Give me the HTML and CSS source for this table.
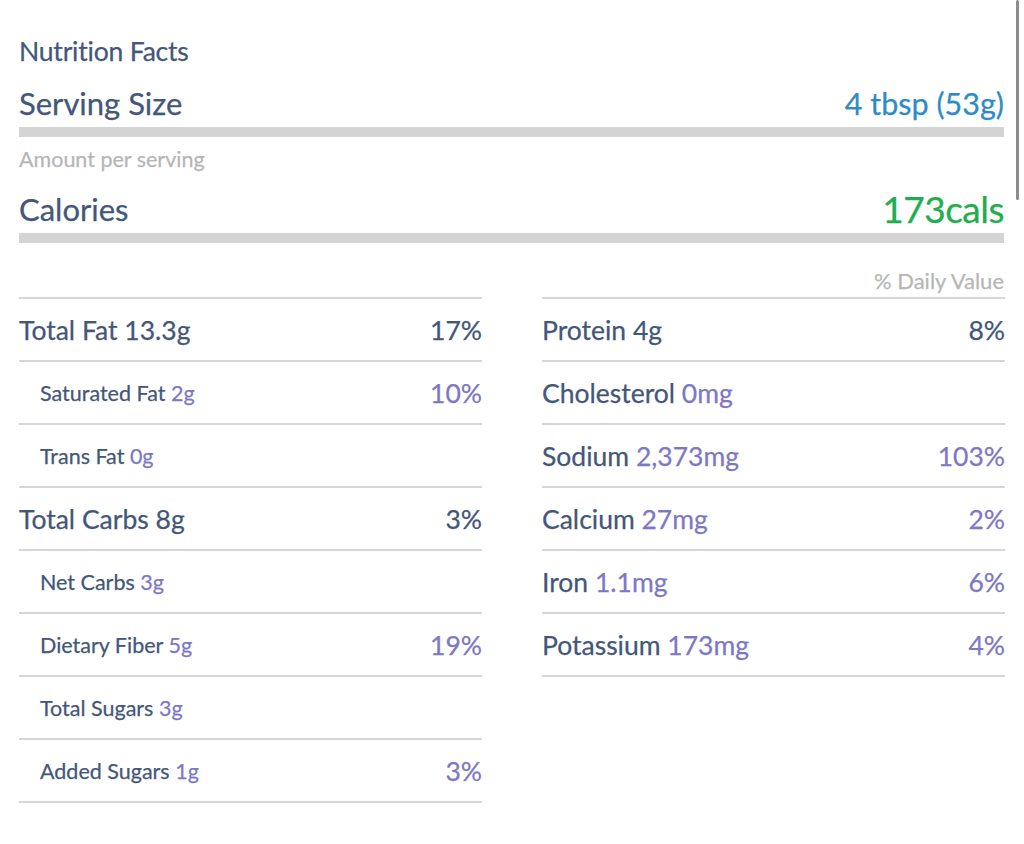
FILE: index.html
```html
<!DOCTYPE html>
<html>
<head>
<meta charset="utf-8">
<link rel="stylesheet" href="styles.css">
</head>
<body>
<div class="page">
  <h1 class="title">Nutrition Facts</h1>
  <div class="big-row serving-row">
    <span class="big-label">Serving Size</span>
    <span class="serving">4 tbsp (53g)</span>
  </div>
  <div class="bar"></div>
  <div class="amount">Amount per serving</div>
  <div class="big-row calories-row">
    <span class="big-label">Calories</span>
    <span class="cals">173cals</span>
  </div>
  <div class="bar bar-tight"></div>
  <div class="dv">% Daily Value</div>
  <div class="columns">
    <div class="col">
      <div class="row"><span class="name">Total Fat <span class="amt-dark">13.3g</span></span><span class="pct">17%</span></div>
      <div class="row sub"><span class="name">Saturated Fat <span class="amt">2g</span></span><span class="pct light">10%</span></div>
      <div class="row sub"><span class="name">Trans Fat <span class="amt">0g</span></span></div>
      <div class="row"><span class="name">Total Carbs <span class="amt-dark">8g</span></span><span class="pct">3%</span></div>
      <div class="row sub"><span class="name">Net Carbs <span class="amt">3g</span></span></div>
      <div class="row sub"><span class="name">Dietary Fiber <span class="amt">5g</span></span><span class="pct light">19%</span></div>
      <div class="row sub"><span class="name">Total Sugars <span class="amt">3g</span></span></div>
      <div class="row sub"><span class="name">Added Sugars <span class="amt">1g</span></span><span class="pct light">3%</span></div>
    </div>
    <div class="col">
      <div class="row"><span class="name">Protein <span class="amt-dark">4g</span></span><span class="pct">8%</span></div>
      <div class="row"><span class="name">Cholesterol <span class="amt">0mg</span></span></div>
      <div class="row"><span class="name">Sodium <span class="amt">2,373mg</span></span><span class="pct light">103%</span></div>
      <div class="row"><span class="name">Calcium <span class="amt">27mg</span></span><span class="pct light">2%</span></div>
      <div class="row"><span class="name">Iron <span class="amt">1.1mg</span></span><span class="pct light">6%</span></div>
      <div class="row"><span class="name">Potassium <span class="amt">173mg</span></span><span class="pct light">4%</span></div>
    </div>
  </div>
</div>
<div class="scrollbar"></div>
</body>
</html>
```

FILE: styles.css
```css
html, body {
  margin: 0;
  padding: 0;
  background: #ffffff;
}

body {
  font-family: "Lato", "Open Sans", sans-serif;
  color: #43577a;
  -webkit-text-stroke: 0.25px currentColor;
}

.page {
  padding: 33px 20px 0 19px;
}

.title {
  margin: 0;
  font-size: 26.5px;
  line-height: 36px;
  font-weight: 400;
  letter-spacing: -0.2px;
  color: #43577a;
}

.big-row {
  display: flex;
  justify-content: space-between;
  align-items: center;
  height: 44px;
}

.serving-row {
  margin-top: 12px;
  margin-bottom: 2px;
}

.big-label {
  font-size: 31px;
  line-height: 44px;
}

.serving {
  font-size: 30.5px;
  line-height: 44px;
  color: #2d8bc8;
}

.cals {
  font-size: 37px;
  line-height: 44px;
  color: #1fae4f;
  letter-spacing: -0.5px;
}

.bar {
  height: 10px;
  background: #d4d4d4;
}

.bar-tight {
  margin-top: 2px;
}

.amount {
  margin-top: 8px;
  font-size: 21.5px;
  line-height: 28px;
  color: #b6b6b6;
}

.calories-row {
  margin-top: 14px;
}

.dv {
  margin-top: 25px;
  text-align: right;
  font-size: 22px;
  line-height: 26px;
  color: #b6b6b6;
  margin-bottom: 3px;
}

.columns {
  display: grid;
  grid-template-columns: 463px 463px;
  column-gap: 60px;
  align-items: start;
}

.col {
  border-top: 2px solid #d6d6d6;
}

.row {
  display: flex;
  justify-content: space-between;
  align-items: center;
  height: 61px;
  border-bottom: 2px solid #d6d6d6;
  font-size: 26.5px;
}

.row.sub {
  padding-left: 21px;
}

.row.sub .name {
  font-size: 21.5px;
}

.amt {
  color: #7c78c6;
}

.amt-dark {
  color: #43577a;
}

.pct {
  font-size: 26.5px;
  color: #43577a;
}

.pct.light {
  color: #7c78c6;
}

.scrollbar {
  position: absolute;
  top: 0;
  left: 1016px;
  width: 3px;
  height: 200px;
  background: #8c8c8c;
  border-radius: 2px;
}
```
